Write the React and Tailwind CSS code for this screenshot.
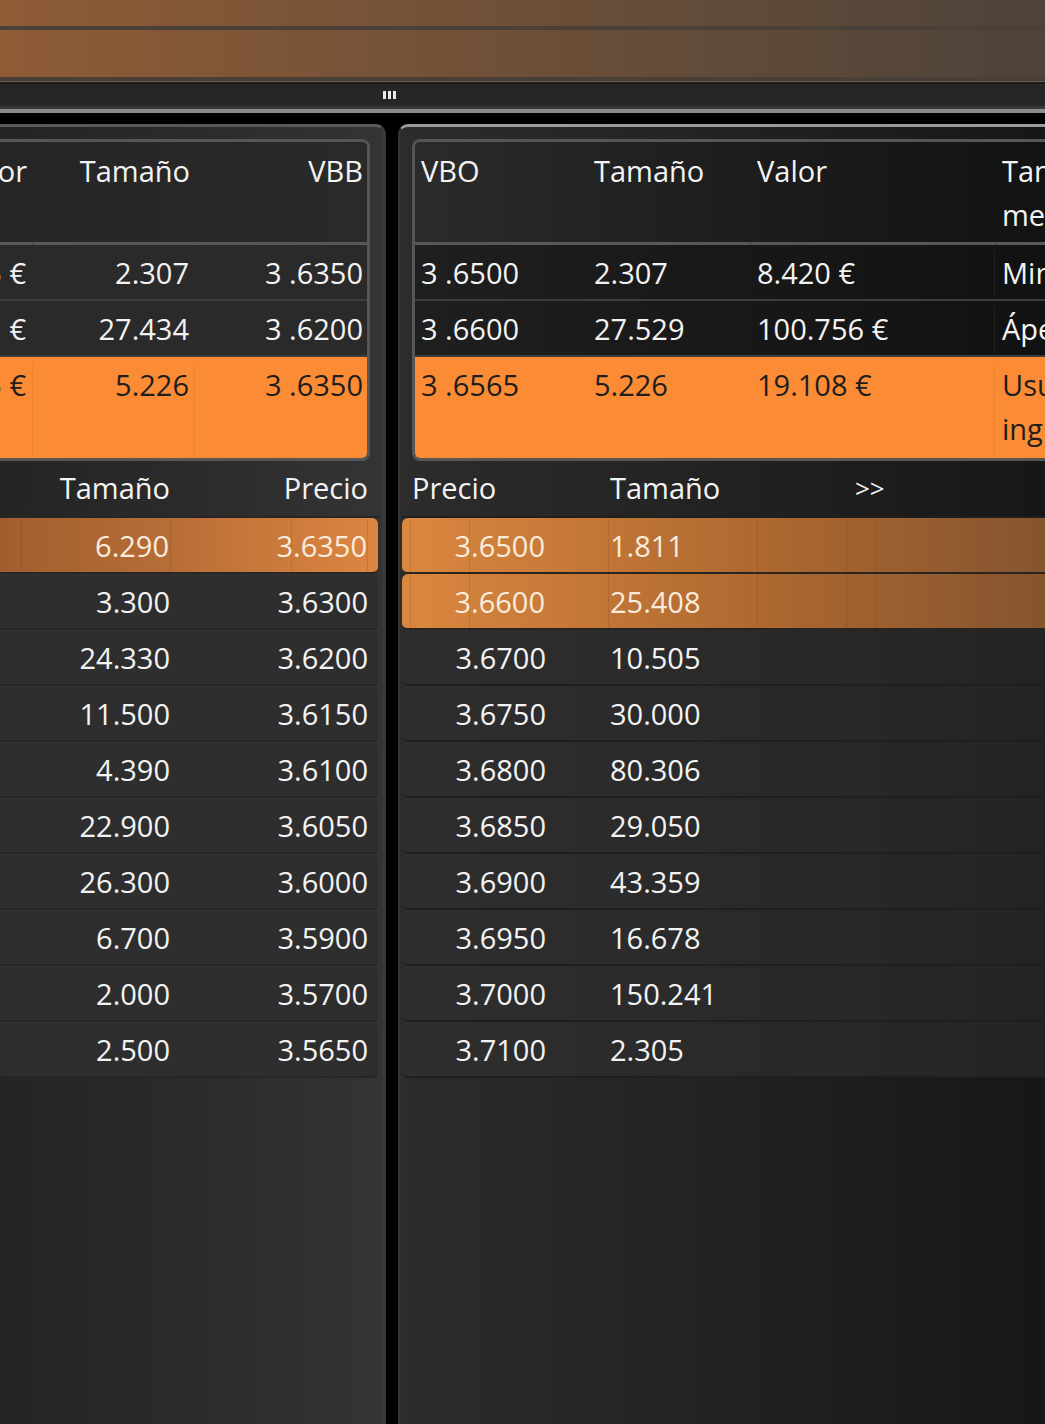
import React from "react";

const leftTop = [
  { v: "8.385 €", t: "2.307", p: "3 .6350" },
  { v: "99.311 €", t: "27.434", p: "3 .6200" },
];
const rightTop = [
  { a: "3 .6500", b: "2.307", c: "8.420 €", d: "Minorista" },
  { a: "3 .6600", b: "27.529", c: "100.756 €", d: "Ápex" },
];

const leftBook = [
  ["6.290", "3.6350"],
  ["3.300", "3.6300"],
  ["24.330", "3.6200"],
  ["11.500", "3.6150"],
  ["4.390", "3.6100"],
  ["22.900", "3.6050"],
  ["26.300", "3.6000"],
  ["6.700", "3.5900"],
  ["2.000", "3.5700"],
  ["2.500", "3.5650"],
];
const rightBook = [
  ["3.6500", "1.811"],
  ["3.6600", "25.408"],
  ["3.6700", "10.505"],
  ["3.6750", "30.000"],
  ["3.6800", "80.306"],
  ["3.6850", "29.050"],
  ["3.6900", "43.359"],
  ["3.6950", "16.678"],
  ["3.7000", "150.241"],
  ["3.7100", "2.305"],
];

function LeftPanel() {
  return (
    <div className="w-[386px] shrink-0 overflow-hidden rounded-tr-[10px] border-t-[3px] border-r-[4px] border-t-[#595959] border-r-[#3a3a3a] bg-gradient-to-r from-[#242424] via-[#2b2b2b] to-[#343434] pt-[12px]">
      <div className="-ml-[100px] w-[482px]">
        {/* top table */}
        <div className="w-[470px] overflow-hidden rounded-[8px] border-[3px] border-[#565656]">
          <div className="flex h-[100px] bg-gradient-to-r from-[#242424] to-[#2a2a2a] pt-[7px]">
            <div className="w-[130px] pr-[6px] text-right">Valor</div>
            <div className="w-[162px] pr-[5px] text-right">Tamaño</div>
            <div className="flex-1 pr-[4px] text-right">VBB</div>
          </div>
          <div className="flex h-[3px] bg-[#585858]">
            <div className="w-[130px] border-r border-[#4a4a4a]" />
            <div className="w-[162px] border-r border-[#4a4a4a]" />
          </div>
          {leftTop.map((r, i) => (
            <div key={i} className="flex h-[56px] border-b-2 border-[#3d3d3d] bg-[#2a2a2a] pt-[6px]">
              <div className="w-[130px] border-r border-[#2e2e2e] pr-[6px] text-right whitespace-nowrap">{r.v}</div>
              <div className="w-[162px] border-r border-[#2e2e2e] pr-[5px] text-right">{r.t}</div>
              <div className="flex-1 pr-[4px] text-right">{r.p}</div>
            </div>
          ))}
          <div className="flex h-[101px] bg-[#fc8b35] pt-[6px] text-[#1e1e1e]">
            <div className="w-[130px] border-r border-[#f08431] pr-[6px] text-right whitespace-nowrap">18.995 €</div>
            <div className="w-[162px] border-r border-[#f08431] pr-[5px] text-right">5.226</div>
            <div className="flex-1 pr-[4px] text-right">3 .6350</div>
          </div>
        </div>

        {/* order book */}
        <div className="w-[478px]">
          <div className="flex h-[57px] items-center border-b-2 border-[#262626] pb-[2px]">
            <div className="w-[122px]" />
            <div className="w-[149px] pr-[1px] text-right">Tamaño</div>
            <div className="w-[197px] text-right">Precio</div>
          </div>
          {leftBook.map((r, i) => {
            const hi = i === 0;
            return (
              <div
                key={i}
                className={
                  hi
                    ? "flex h-[56px] items-center rounded-[6px] border-b-2 border-[#262626] bg-gradient-to-r from-[#93562b] via-[#b36a35] to-[#dc8641] pt-[1px] text-[#f7ecdd]"
                    : "flex h-[56px] items-center rounded-[6px] border-b-2 border-[#262626] bg-[#2e2e2e] pt-[1px] shadow-[inset_0_1px_0_#333333]"
                }
              >
                <div className={hi ? "h-full w-[122px] border-r border-[#00000018]" : "h-full w-[122px]"} />
                <div className={hi ? "flex h-full w-[149px] items-center justify-end border-r border-[#00000018] pr-[1px]" : "flex h-full w-[149px] items-center justify-end pr-[1px]"}>{r[0]}</div>
                <div
                  className={
                    hi
                      ? "flex h-full w-[197px] items-center justify-end border-r border-[#00000018] bg-[linear-gradient(to_right,transparent_120px,#00000018_120px,#00000018_121px,transparent_121px)]"
                      : "flex h-full w-[197px] items-center justify-end"
                  }
                >
                  {r[1]}
                </div>
              </div>
            );
          })}
        </div>
      </div>
    </div>
  );
}

function RightPanel() {
  return (
    <div className="min-w-0 flex-1 overflow-hidden rounded-tl-[10px] border-t-[3px] border-l-2 border-t-[#9a9a9a] border-l-[#333333] bg-gradient-to-r from-[#2c2c2c] via-[#222222] to-[#171717] pt-[12px]">
      {/* top table */}
      <div className="ml-[12px] w-[800px] overflow-hidden rounded-l-[8px] border-y-[3px] border-l-[3px] border-[#565656]">
        <div className="flex h-[100px] bg-gradient-to-r from-[#2b2b2b] via-[#1a1a1a] to-[#0e0e0e] pt-[7px]">
          <div className="w-[173px] pl-[6px]">VBO</div>
          <div className="w-[162px] pl-[6px]">Tamaño</div>
          <div className="w-[245px] pl-[7px]">Valor</div>
          <div className="w-[130px] pl-[7px]">Tamaño medio</div>
        </div>
        <div className="flex h-[3px] bg-[#585858]">
          <div className="w-[335px]" />
          <div className="w-[245px] border-l border-[#444444]" />
          <div className="w-[130px] border-l border-[#444444]" />
        </div>
        {rightTop.map((r, i) => (
          <div key={i} className="flex h-[56px] border-b-2 border-[#3d3d3d] bg-gradient-to-r from-[#1f1f1f] to-[#0e0e0e] pt-[6px] whitespace-nowrap">
            <div className="w-[173px] pl-[6px]">{r.a}</div>
            <div className="w-[162px] pl-[6px]">{r.b}</div>
            <div className="w-[245px] border-r border-[#222222] pl-[7px]">{r.c}</div>
            <div className="w-[130px] pl-[7px]">{r.d}</div>
          </div>
        ))}
        <div className="flex h-[101px] bg-[#fc8b35] pt-[6px] text-[#1e1e1e]">
          <div className="w-[173px] pl-[6px]">3 .6565</div>
          <div className="w-[162px] pl-[6px]">5.226</div>
          <div className="w-[245px] border-r border-[#f08431] pl-[7px]">19.108 €</div>
          <div className="w-[130px] pl-[7px]">Usuario ingresado</div>
        </div>
      </div>

      {/* order book */}
      <div className="ml-[2px] w-[800px]">
        <div className="flex h-[57px] items-center border-b-2 border-[#1f1f1f] pb-[2px]">
          <div className="w-[207px] pl-[10px]">Precio</div>
          <div className="w-[246px] pl-[1px]">Tamaño</div>
          <div className="text-[26px]">&gt;&gt;</div>
        </div>
        {rightBook.map((r, i) => {
          const hi = i < 2;
          return (
            <div
              key={i}
              className={
                hi
                  ? "flex h-[56px] items-center rounded-l-[6px] border-b-2 border-[#2a2420] bg-gradient-to-r from-[#db873f] via-[#a9652f] to-[#6e4a2e] pt-[1px] text-[#f7ecdd]"
                  : "flex h-[56px] items-center rounded-l-[6px] border-b-2 border-[#1f1f1f] bg-gradient-to-r from-[#2e2e2e] via-[#292929] to-[#202020] pt-[1px]"
              }
            >
              <div className={hi ? "h-full w-[9px] border-r border-[#00000018]" : "h-full w-[9px]"} />
              <div
                className={
                  hi
                    ? "flex h-full w-[198px] items-center justify-end border-r border-[#00000018] bg-[linear-gradient(to_right,transparent_58px,#00000018_58px,#00000018_59px,transparent_59px)] pr-[63px]"
                    : "flex h-full w-[198px] items-center justify-end pr-[63px]"
                }
              >
                {r[0]}
              </div>
              <div className={hi ? "flex h-full w-[149px] items-center border-r border-[#00000018] pl-[1px]" : "flex h-full w-[149px] items-center pl-[1px]"}>{r[1]}</div>
              <div className={hi ? "h-full w-[89px] border-r border-[#00000018]" : "h-full w-[89px]"} />
              <div className={hi ? "h-full w-[30px] border-r border-[#00000018]" : "h-full w-[30px]"} />
              <div className="h-full flex-1" />
            </div>
          );
        })}
      </div>
    </div>
  );
}

export default function App() {
  return (
    <div className="flex h-[1424px] w-[1045px] flex-col overflow-hidden bg-black font-['Open_Sans',sans-serif] text-[29px] leading-[44px] text-[#f3f3f3]">
      <div className="h-[26px] shrink-0 bg-gradient-to-r from-[#8f5c36] via-[#6d4f38] to-[#4d4339]" />
      <div className="h-[4px] shrink-0 bg-[#4a4038]" />
      <div className="h-[47px] shrink-0 bg-gradient-to-r from-[#8f5c36] via-[#6d4f38] to-[#4d4339]" />
      <div className="h-[4px] shrink-0 bg-[#4a3f37]" />
      <div className="h-[1px] shrink-0 bg-[#6a5d51]" />
      <div className="h-[2px] shrink-0 bg-[#1b1b1b]" />
      <div className="flex h-[22px] shrink-0 items-center bg-[#262626] pl-[383px]">
        <div className="flex gap-[2px]">
          <span className="h-[8px] w-[3px] bg-[#e8e8e8]" />
          <span className="h-[8px] w-[3px] bg-[#e8e8e8]" />
          <span className="h-[8px] w-[3px] bg-[#e8e8e8]" />
        </div>
      </div>
      <div className="h-[3px] shrink-0 bg-[#383838]" />
      <div className="h-[4px] shrink-0 bg-[#8c8c8c]" />
      <div className="h-[11px] shrink-0 bg-black" />
      <div className="flex min-h-0 flex-1 gap-[12px]">
        <LeftPanel />
        <RightPanel />
      </div>
    </div>
  );
}
